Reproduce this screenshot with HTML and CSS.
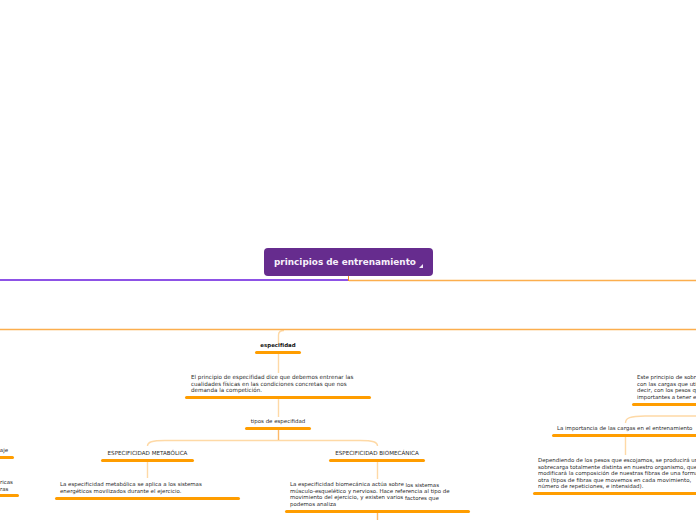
FILE: index.html
```html
<!DOCTYPE html>
<html lang="es">
<head>
<meta charset="utf-8">
<title>principios de entrenamiento</title>
<link rel="stylesheet" href="styles.css">
</head>
<body>
<main class="map">
  <svg class="links" width="696" height="520" viewBox="0 0 696 520" fill="none">
    <path class="soft" d="M278.5 335V345M278.5 353V373M278.5 398V417"/>
    <path class="soft" d="M147.5 446C147.5 442 152 440.5 165 440.5H360C373 440.5 377.5 442 377.5 446"/>
    <path class="soft" d="M147.5 461V478M377.5 461V479"/>
    <path class="mid" d="M278.5 429V440M377.5 512V520"/>
    <path class="soft" d="M625.5 423C625.5 418 630 416 645 416H696M625.5 436V455"/>
    <path class="soft" d="M278.5 335C278.5 332 280 330.5 284 330.5"/>
    <path class="rule" d="M0 329.5H696"/>
    <path class="rule" d="M349 280.5H696"/>
    <path class="purple" d="M0 280H348"/>
    <path class="stem" d="M348.5 276V281"/>
  </svg>

  <div class="root">
    <span class="root-label">principios de entrenamiento</span>
    <span class="root-mark"></span>
  </div>

  <div class="node n-esp"><p class="strong center">especifidad</p></div>
  <div class="node n-def"><p class="large">El principio de especifidad dice que debemos entrenar las<br>cualidades físicas en las condiciones concretas que nos<br>demanda la competición.</p></div>
  <div class="node n-tipos"><p class="center">tipos de especifidad</p></div>
  <div class="node n-metab"><p class="center large">ESPECIFICIDAD METABÓLICA</p></div>
  <div class="node n-biome"><p class="center large">ESPECIFICIDAD BIOMECÁNICA</p></div>
  <div class="node n-metab-t"><p>La especificidad metabólica se aplica a los sistemas<br>energéticos movilizados durante el ejercicio.</p></div>
  <div class="node n-biome-t"><p>La especificidad biomecánica actúa sobre <span class="drop">los sistemas</span><br>músculo-esquelético y nervioso. Hace referencia al tipo de<br>movimiento del ejercicio, y existen varios <span class="drop">factores que</span><br>podemos analiza</p></div>
  <div class="node n-left1"><p class="right">aje</p></div>
  <div class="node n-left2"><p>ricas<br>ras</p></div>
  <div class="node n-carga"><p>Este principio de sobrecarga está relacionado<br>con las cargas que utilizamos al entrenar, es<br>decir, con los pesos que movemos, aspectos<br>importantes a tener en cuenta.</p></div>
  <div class="node n-imp"><p>La importancia de las cargas en el entrenamiento</p></div>
  <div class="node n-pesos"><p>Dependiendo de los pesos que escojamos, se producirá una<br>sobrecarga totalmente distinta en nuestro organismo, que<br>modificará la composición de nuestras fibras de una forma u<br>otra (tipos de fibras que movemos en cada movimiento,<br>número de repeticiones, e intensidad).</p></div>
</main>
</body>
</html>
```

FILE: styles.css
```css
html, body {
  margin: 0;
  padding: 0;
  width: 696px;
  height: 520px;
  overflow: hidden;
  background: #fff;
}
.map {
  position: relative;
  width: 696px;
  height: 520px;
  overflow: hidden;
  font-family: "DejaVu Sans", sans-serif;
}
.links {
  position: absolute;
  left: 0;
  top: 0;
}
.soft { stroke: #fed9a6; stroke-width: 1.4; }
.mid { stroke: #fdb968; stroke-width: 1.4; }
.rule { stroke: #fcae4e; stroke-width: 1.4; }
.purple { stroke: #8d52e6; stroke-width: 2; }
.stem { stroke: #f08a24; stroke-width: 1; }

.root {
  position: absolute;
  left: 264px;
  top: 248px;
  width: 169px;
  height: 28px;
  box-sizing: border-box;
  padding-left: 10px;
  display: flex;
  align-items: center;
  background: #662c8e;
  border-radius: 4px;
  color: #f6f0fa;
}
.root-label {
  font-size: 8.9px;
  font-weight: 700;
  white-space: nowrap;
}
.root-mark {
  position: absolute;
  left: 155px;
  top: 16px;
  width: 0;
  height: 0;
  border-left: 4px solid transparent;
  border-bottom: 4px solid #f0e8f6;
}

.node {
  position: absolute;
  box-sizing: border-box;
  display: flex;
  flex-direction: column;
  justify-content: space-between;
  color: #2b2b2b;
}
.node::after {
  content: "";
  height: 3px;
  margin-left: 0;
  border-radius: 2px;
  background: #ff9d00;
}
.node p {
  margin: 0;
  font-size: 5.45px;
  line-height: 6.6px;
  white-space: nowrap;
}
.node .large { font-size: 5.6px; }
.node .center { text-align: center; }
.node .right { text-align: right; }
.node .strong { font-weight: 700; color: #111; }
.drop { vertical-align: -1px; line-height: 0; }

.n-esp { left: 255px; top: 342px; width: 46px; height: 12px; }
.n-def { left: 185px; top: 374px; width: 186px; height: 25px; }
.n-tipos { left: 245px; top: 418px; width: 66px; height: 12px; }
.n-metab { left: 101px; top: 450px; width: 93px; height: 12px; }
.n-biome { left: 329px; top: 450px; width: 96px; height: 12px; }
.n-metab-t { left: 55px; top: 481px; width: 185px; height: 19px; }
.n-biome-t { left: 285px; top: 481px; width: 185px; height: 32px; }
.n-left1 { left: -20px; top: 447px; width: 34px; height: 12px; }
.n-left2 { left: -20px; top: 479px; width: 39px; height: 18px; }
.n-carga { left: 632px; top: 374px; width: 140px; height: 32px; }
.n-imp { left: 552px; top: 425px; width: 160px; height: 12px; }
.n-pesos { left: 533px; top: 457px; width: 190px; height: 38px; }

.n-def p { padding-left: 6px; }
.n-metab-t p, .n-biome-t p, .n-carga p, .n-imp p, .n-pesos p { padding-left: 5px; }
.n-left1 p { padding-right: 6px; }
.n-left2 p { padding-left: 20px; }
```
